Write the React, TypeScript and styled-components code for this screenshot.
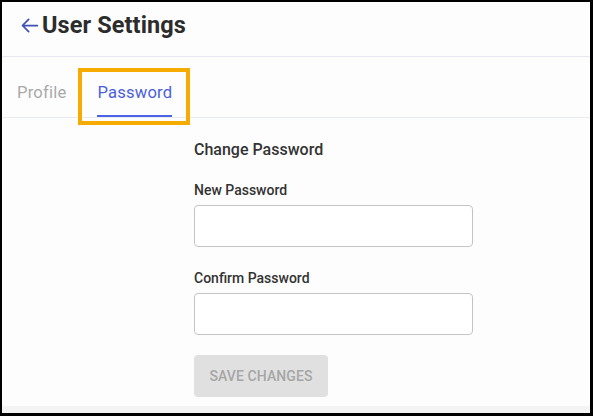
import styled, { createGlobalStyle } from "styled-components";

const Global = createGlobalStyle`
  html, body {
    margin: 0;
    padding: 0;
    background: #000;
  }
  * {
    box-sizing: border-box;
  }
`;

const Frame = styled.div`
  width: 593px;
  height: 416px;
  border-top: 2px solid #000;
  border-left: 2px solid #000;
  border-right: 3px solid #000;
  border-bottom: 3px solid #000;
  background: #f4f4f4;
  font-family: Roboto, "Liberation Sans", sans-serif;
  overflow: hidden;
`;

const Page = styled.div`
  background: #fdfdfd;
  height: 404px;
  display: flex;
  flex-direction: column;
`;

const Header = styled.div`
  height: 55px;
  display: flex;
  align-items: flex-start;
  padding: 8px 0 0 17px;
  gap: 2px;
  border-bottom: 1px solid #e8e8f0;
`;

const BackButton = styled.button`
  border: none;
  background: none;
  padding: 0;
  display: flex;
  align-items: center;
  cursor: pointer;
  margin-top: 5px;
`;

const Title = styled.h1`
  margin: 0;
  font-size: 23.5px;
  line-height: 30px;
  font-weight: 700;
  color: #2c2c2c;
  letter-spacing: 0.1px;
`;

const TabBar = styled.div`
  height: 61px;
  display: flex;
  align-items: stretch;
  border-bottom: 1px solid #e8ecf2;
`;

const Tab = styled.div<{ $active?: boolean }>`
  position: relative;
  display: flex;
  align-items: flex-end;
  padding: 0 0 13px;
  margin: 0 ${(p) => (p.$active ? "18px" : "0")} 0 ${(p) => (p.$active ? "31px" : "15px")};
  font-size: 16.6px;
  color: ${(p) => (p.$active ? "#4a5fe0" : "#a9a9a9")};
  border-bottom: 2px solid ${(p) => (p.$active ? "#4a63e7" : "transparent")};
  letter-spacing: 0.2px;
`;

const Highlight = styled.div`
  position: absolute;
  left: -19px;
  right: -18px;
  top: 11px;
  bottom: -10px;
  border: 4px solid #f5ab00;
  pointer-events: none;
`;

const Form = styled.form`
  margin-left: 192px;
  width: 279px;
  padding-top: 22px;
  display: flex;
  flex-direction: column;
`;

const FormTitle = styled.h2`
  margin: 0 0 23px;
  font-size: 16px;
  line-height: 19px;
  font-weight: 500;
  color: #333;
`;

const Field = styled.div`
  display: flex;
  flex-direction: column;
  margin-bottom: 23px;
`;

const Label = styled.label`
  font-size: 14px;
  line-height: 17px;
  font-weight: 500;
  color: #333;
  margin-bottom: 6px;
`;

const Input = styled.input`
  height: 42px;
  border: 1px solid #c4c4c4;
  border-radius: 4px;
  background: #fff;
  font-size: 14px;
  padding: 0 10px;
`;

const SaveButton = styled.button`
  margin-top: -3px;
  width: 134px;
  height: 42px;
  border: none;
  border-radius: 4px;
  background: #e0e0e0;
  color: #a6a6a6;
  font-family: Roboto, "Liberation Sans", sans-serif;
  font-size: 14px;
  font-weight: 500;
  letter-spacing: 0.1px;
  text-transform: uppercase;
`;

function ArrowLeft() {
  return (
    <svg width="21" height="21" viewBox="0 0 24 24" fill="none">
      <path
        d="M21 12H4M11 5l-7 7 7 7"
        stroke="#3f51b5"
        strokeWidth="2"
        strokeLinecap="round"
        strokeLinejoin="round"
      />
    </svg>
  );
}

export default function App() {
  return (
    <>
      <Global />
      <Frame>
        <Page>
          <Header>
            <BackButton aria-label="Back">
              <ArrowLeft />
            </BackButton>
            <Title>User Settings</Title>
          </Header>
          <TabBar>
            <Tab>Profile</Tab>
            <Tab $active>
              Password
              <Highlight />
            </Tab>
          </TabBar>
          <Form onSubmit={(e) => e.preventDefault()}>
            <FormTitle>Change Password</FormTitle>
            <Field>
              <Label>New Password</Label>
              <Input type="password" />
            </Field>
            <Field>
              <Label>Confirm Password</Label>
              <Input type="password" />
            </Field>
            <SaveButton type="submit" disabled>
              Save Changes
            </SaveButton>
          </Form>
        </Page>
      </Frame>
    </>
  );
}
